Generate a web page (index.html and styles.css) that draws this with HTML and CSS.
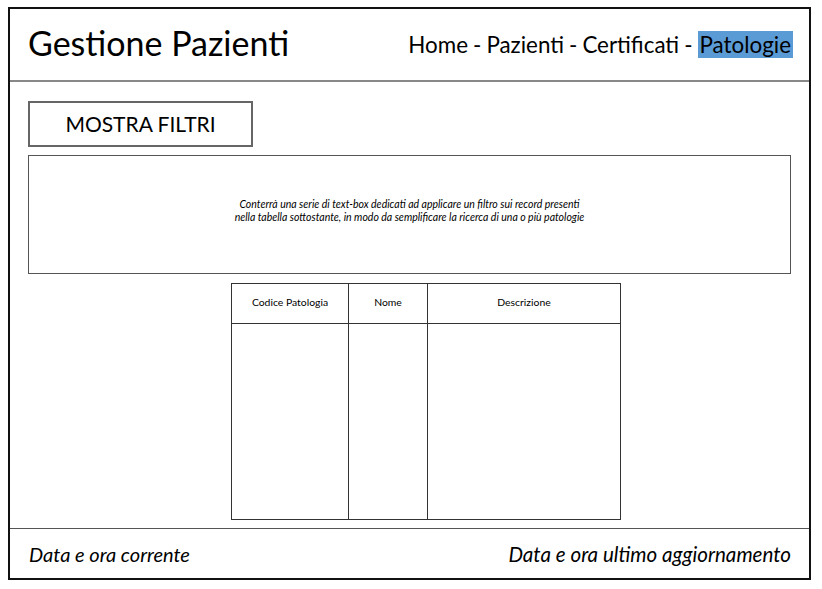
FILE: index.html
```html
<!DOCTYPE html>
<html lang="it">
<head>
    <meta charset="UTF-8">
    <title>Gestione Pazienti - Patologie</title>
    <link rel="stylesheet" href="styles.css">
</head>
<body>
<div class="frame">
    <div class="header">
        <h1 class="title">Gestione Pazienti</h1>
        <ul class="nav">
            <li><a href="">Home</a></li>
            <li class="sep">-</li>
            <li><a href="">Pazienti</a></li>
            <li class="sep">-</li>
            <li><a href="">Certificati</a></li>
            <li class="sep">-</li>
            <li><a class="current" href="">Patologie</a></li>
        </ul>
    </div>
    <div class="main">
        <a class="btn" href="javascript:;">MOSTRA FILTRI</a>
        <div class="filters">
            <p>Conterrà una serie di text-box dedicati ad applicare un filtro sui record presenti<br>
                nella tabella sottostante, in modo da semplificare la ricerca di una o più patologie</p>
        </div>
        <table class="grid">
            <thead>
            <tr>
                <th class="c1">Codice Patologia</th>
                <th class="c2">Nome</th>
                <th class="c3">Descrizione</th>
            </tr>
            </thead>
            <tbody>
            <tr>
                <td></td>
                <td></td>
                <td></td>
            </tr>
            </tbody>
        </table>
    </div>
    <div class="footer">
        <span>Data e ora corrente</span>
        <span class="updated">Data e ora ultimo aggiornamento</span>
    </div>
</div>
</body>
</html>
```

FILE: styles.css
```css
* {
    margin: 0;
    padding: 0;
    box-sizing: border-box;
}

ul {
    list-style: none;
}

a {
    text-decoration: none;
    color: #000;
}

body {
    background: #fff;
    color: #000;
    font-family: Lato, "Open Sans", sans-serif;
}

.frame {
    width: 803px;
    height: 573px;
    margin: 7px 0 0 8px;
    border: 2px solid #111;
    display: flex;
    flex-direction: column;
}

.header {
    height: 73px;
    border-bottom: 2px solid #888;
    display: flex;
    align-items: center;
    justify-content: space-between;
    padding: 0 16px 0 18px;
}

.title {
    font-size: 34px;
    font-weight: 400;
    margin-top: -5px;
}

.nav {
    display: flex;
    gap: 5px;
    font-size: 22.4px;
    line-height: 24px;
}

.nav .current {
    background: #5b9bd5;
    padding: 0 2px 0 2px;
}

.main {
    flex: 1;
    padding: 19px 18px 0;
    display: flex;
    flex-direction: column;
}

.btn {
    width: 225px;
    height: 46px;
    border: 2px solid #666;
    font-size: 21px;
    display: flex;
    align-items: center;
    justify-content: center;
    padding-bottom: 2px;
}

.filters {
    margin-top: 8px;
    height: 119px;
    border: 1px solid #555;
    display: flex;
    align-items: center;
    justify-content: center;
    padding-bottom: 8px;
}

.filters p {
    font-size: 10.5px;
    font-style: italic;
    line-height: 13px;
    text-align: center;
}

.grid {
    margin: 9px 0 0 203px;
    width: 390px;
    height: 237px;
    border-collapse: collapse;
    border: 1px solid #333;
}

.grid th {
    height: 40px;
    font-size: 10.4px;
    font-weight: 400;
    border: 1px solid #333;
    padding-bottom: 4px;
}

.grid td {
    border-left: 1px solid #333;
    border-right: 1px solid #333;
}

.grid .c1 {
    width: 117px;
}

.grid .c2 {
    width: 79px;
}

.footer {
    height: 50px;
    border-top: 1px solid #555;
    display: flex;
    align-items: center;
    justify-content: space-between;
    padding: 0 18px 0 19px;
    font-size: 20px;
    font-style: italic;
}

.footer .updated {
    font-size: 20.6px;
}
```
